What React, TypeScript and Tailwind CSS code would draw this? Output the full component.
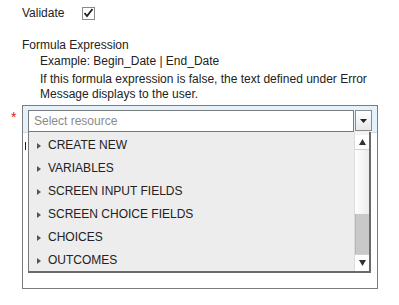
import React from 'react'

const items = ['CREATE NEW', 'VARIABLES', 'SCREEN INPUT FIELDS', 'SCREEN CHOICE FIELDS', 'CHOICES', 'OUTCOMES']

function Caret() {
  return (
    <svg width="4" height="6" viewBox="0 0 4 6" className="shrink-0">
      <path d="M0 0 L4 3 L0 6 Z" fill="#555" />
    </svg>
  )
}

export default function App() {
  return (
    <div className="w-[399px] h-[305px] bg-white text-[12px] text-[#222] leading-[15px]" style={{ fontFamily: '"Liberation Sans", Arial, sans-serif' }}>
      <div className="pl-[22px] pt-[6px]">
        <div className="flex items-center h-[14px]">
          <span>Validate</span>
          <span className="ml-[18px] w-[13px] h-[13px] border border-[#8a8a8a] bg-white flex items-center justify-center">
            <svg width="11" height="10" viewBox="0 0 11 10">
              <path d="M1.5 5 L4 8 L9.5 1" fill="none" stroke="#222" strokeWidth="1.8" />
            </svg>
          </span>
        </div>
        <div className="mt-[18px]">Formula Expression</div>
        <div className="pl-[18px] mt-[1px]">
          <div>Example: Begin_Date | End_Date</div>
          <div className="mt-[3px]">If this formula expression is false, the text defined under Error</div>
          <div>Message displays to the user.</div>
        </div>
      </div>

      <div className="flex mt-[3px]">
        <div className="w-[22px] pl-[11px] text-[#d42020] text-[14px] leading-[14px] pt-[5px]">*</div>
        <div className="relative w-[356px] h-[184px] border border-[#7c7c7c] bg-white">
          <div className="h-[27px] bg-[#e6f2fb] border-b border-[#cfdbe6] pl-[5px] pt-[4px] flex">
            <div className="w-[326px] h-[22px] border border-[#7a7a7a] bg-white pl-[5px] flex items-center text-[#8a8a8a]">
              Select resource
            </div>
            <div className="ml-[1px] w-[17px] h-[21px] border border-[#8a8a8a] bg-gradient-to-b from-white to-[#e8e8e8] flex items-center justify-center">
              <svg width="7" height="4" viewBox="0 0 7 4"><path d="M0 0 H7 L3.5 4 Z" fill="#222" /></svg>
            </div>
          </div>
          <div className="ml-[2px] mt-[9px] w-[1px] h-[8px] bg-[#222]" />

          <div className="absolute left-[5px] top-[26px] w-[343px] h-[141px] flex overflow-hidden border-l border-[#7a7a7a] border-b-2 border-r-2 border-b-[#6a6a6a] border-r-[#6a6a6a] bg-[#ededee]">
            <div className="flex-1 pt-[2px]">
              {items.map(item => (
                <div key={item} className="h-[23px] flex items-center pl-[8px] gap-[7px] text-[#222]">
                  <Caret />
                  <span>{item}</span>
                </div>
              ))}
            </div>
            <div className="w-[15px] flex flex-col bg-[#f4f4f4] border-l border-[#dcdcdc] pt-[3px]">
              <div className="h-[15px] bg-white border-b border-[#d0d0d0] flex items-center justify-center">
                <svg width="7" height="6" viewBox="0 0 7 6"><path d="M3.5 0 L7 6 H0 Z" fill="#333" /></svg>
              </div>
              <div className="flex-1 bg-gradient-to-r from-white to-[#ececec]" />
              <div className="h-[40px] bg-[#c9c9c9] border-l border-[#b5b5b5]" />
              <div className="h-[17px] bg-white border-t border-[#d0d0d0] flex items-center justify-center">
                <svg width="7" height="6" viewBox="0 0 7 6"><path d="M0 0 H7 L3.5 6 Z" fill="#333" /></svg>
              </div>
            </div>
          </div>
        </div>
      </div>
    </div>
  )
}
